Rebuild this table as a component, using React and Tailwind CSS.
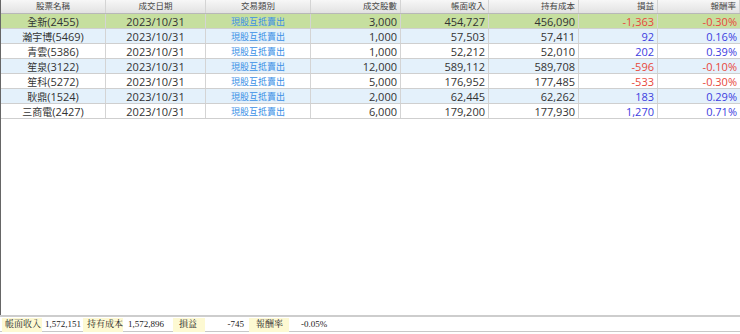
const cols = [
  { label: "股票名稱", w: "w-[105px]", align: "center" },
  { label: "成交日期", w: "w-[100px]", align: "center" },
  { label: "交易類別", w: "w-[105px]", align: "center" },
  { label: "成交股數", w: "w-[90px]", align: "right" },
  { label: "帳面收入", w: "w-[88px]", align: "right" },
  { label: "持有成本", w: "w-[90px]", align: "right" },
  { label: "損益", w: "w-[79px]", align: "right" },
  { label: "報酬率", w: "flex-1", align: "right" },
];

const rows = [
  ["全新(2455)", "3,000", "454,727", "456,090", "-1,363", "-0.30%"],
  ["瀚宇博(5469)", "1,000", "57,503", "57,411", "92", "0.16%"],
  ["青雲(5386)", "1,000", "52,212", "52,010", "202", "0.39%"],
  ["笙泉(3122)", "12,000", "589,112", "589,708", "-596", "-0.10%"],
  ["笙科(5272)", "5,000", "176,952", "177,485", "-533", "-0.30%"],
  ["耿鼎(1524)", "2,000", "62,445", "62,262", "183", "0.29%"],
  ["三商電(2427)", "6,000", "179,200", "177,930", "1,270", "0.71%"],
];

const rowBg = ["bg-[#c6df9f]", "bg-[#e4f1fb]", "bg-white", "bg-[#e4f1fb]", "bg-white", "bg-[#e4f1fb]", "bg-white"];

const Cell = ({ w, align, className = "", children }) => (
  <div
    className={`${w} shrink-0 h-full flex items-center whitespace-nowrap border-r border-[#d4d4d4] px-[3px] ${
      align === "right" ? "justify-end" : "justify-center"
    } ${className}`}
  >
    {children}
  </div>
);

// split stock name so the CJK part can be a touch smaller than the digits
const Name = ({ text }) => {
  const i = text.indexOf("(");
  return (
    <span>
      <span className="text-[10px]">{text.slice(0, i)}</span>
      {text.slice(i)}
    </span>
  );
};

const Label = ({ w, pl, children }) => (
  <div className={`${w} ${pl} h-[14px] bg-[#fdf9d2] flex items-center whitespace-nowrap`}>{children}</div>
);

export default function App() {
  return (
    <div
      className="w-[740px] h-[334px] bg-white flex flex-col text-[11px] text-[#333] leading-none overflow-hidden"
      style={{ fontFamily: '"Open Sans", "Noto Sans CJK TC", sans-serif' }}
    >
      <div className="flex-1 flex flex-col border-l border-[#666]">
        <div className="flex h-[14px] bg-gradient-to-b from-[#f7f7f7] to-[#e2e2e2] border-b border-[#b8b8b8] text-[#444] text-[8.5px]">
          {cols.map((c) => (
            <Cell key={c.label} w={c.w} align={c.align} className="border-[#c4c4c4]">
              {c.label}
            </Cell>
          ))}
        </div>
        {rows.map((r, i) => {
          const neg = r[4].startsWith("-");
          const pl = neg ? "text-[#e8483c]" : "text-[#3d3de0]";
          return (
            <div key={r[0]} className={`flex h-[15px] border-b border-[#cfcfcf] ${rowBg[i]}`}>
              <Cell w={cols[0].w} align="center"><Name text={r[0]} /></Cell>
              <Cell w={cols[1].w} align="center">2023/10/31</Cell>
              <Cell w={cols[2].w} align="center" className="text-[#3a8fe6] text-[9px]">現股互抵賣出</Cell>
              <Cell w={cols[3].w} align="right">{r[1]}</Cell>
              <Cell w={cols[4].w} align="right">{r[2]}</Cell>
              <Cell w={cols[5].w} align="right">{r[3]}</Cell>
              <Cell w={cols[6].w} align="right" className={pl}>{r[4]}</Cell>
              <Cell w={cols[7].w} align="right" className={`${pl} border-r-0`}>{r[5]}</Cell>
            </div>
          );
        })}
      </div>
      <div
        className="h-[19px] shrink-0 border-t-2 border-[#cdcdcd] pb-[2px] flex flex-col text-[9px] text-[#222]"
        style={{ fontFamily: '"Liberation Serif", "Noto Serif CJK TC", "Noto Sans CJK TC", serif' }}
      >
        <div className="h-[15px] border-b border-[#c8c8c8] flex items-center px-[2px] pt-[1px]">
          <Label w="w-[40px]" pl="pl-[3px]">帳面收入</Label>
          <div className="w-[41px] h-[14px] flex items-center justify-end pr-[2px]">1,572,151</div>
          <Label w="w-[40px]" pl="pl-[4px]">持有成本</Label>
          <div className="w-[42px] h-[14px] flex items-center justify-end pr-[1px]">1,572,896</div>
          <div className="w-[8px]" />
          <Label w="w-[32px]" pl="pl-[6px]">損益</Label>
          <div className="w-[40px] h-[14px] flex items-center justify-end pr-[1px]">-745</div>
          <div className="w-[4px]" />
          <Label w="w-[40px]" pl="pl-[7px]">報酬率</Label>
          <div className="w-[12px]" />
          <div className="h-[14px] flex items-center">-0.05%</div>
        </div>
      </div>
    </div>
  );
}
